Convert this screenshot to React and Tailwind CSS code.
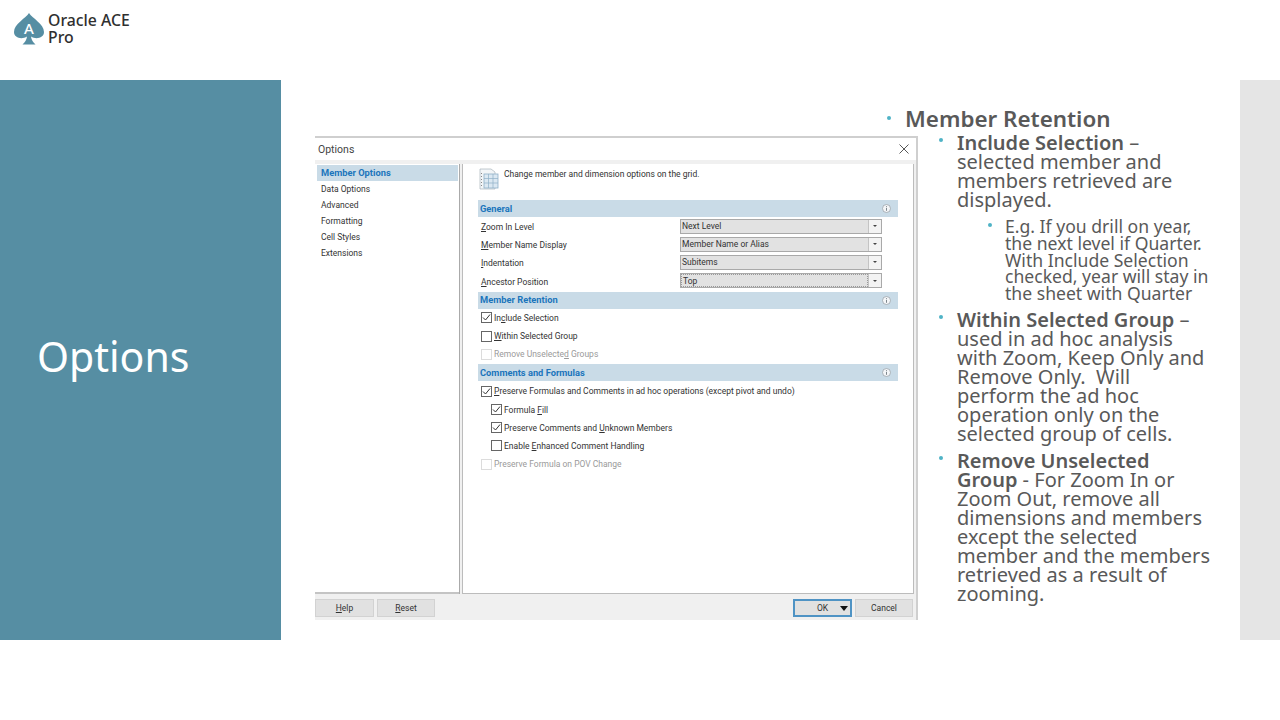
import React from "react";

const sans = "font-['Noto_Sans',sans-serif]";
const ui = "font-['Roboto',sans-serif] text-[8.5px] leading-[12px]";

function U({ children }) {
  return <span className="underline underline-offset-1">{children}</span>;
}

function Check({ checked, disabled }) {
  return (
    <span className={`w-[11px] h-[11px] border flex items-center justify-center shrink-0 bg-white ${disabled ? "border-[#dcdcdc]" : "border-[#666]"}`}>
      {checked && (
        <svg width="9" height="9" viewBox="0 0 9 9" fill="none" stroke="#333" strokeWidth="1">
          <path d="M1 4.5 L3.5 7 L8 1.5" />
        </svg>
      )}
    </span>
  );
}

function CheckRow({ checked, disabled, indent, children }) {
  return (
    <div className={`h-[18.2px] flex items-center gap-[2px] ${indent ? "pl-[13px]" : "pl-[3px]"} ${disabled ? "text-[#9a9a9a]" : "text-[#333]"}`}>
      <Check checked={checked} disabled={disabled} />
      <span>{children}</span>
    </div>
  );
}

function Section({ title, className = "" }) {
  return (
    <div className={`h-[17px] bg-[#c9dbe7] flex items-center justify-between pl-[2px] pr-[7px] ${className}`}>
      <span className="text-[#1b75bc] font-bold text-[9.3px]">{title}</span>
      <svg width="9" height="9" viewBox="0 0 9 9">
        <circle cx="4.5" cy="4.5" r="4" fill="#f4f6f8" stroke="#9aa3a9" strokeWidth="0.8" />
        <path d="M4.5 2.2v.8M4.5 3.8v3" stroke="#7d868c" strokeWidth="1" />
      </svg>
    </div>
  );
}

function Field({ label, value, focus }) {
  return (
    <div className="h-[18.2px] flex items-center pr-[16px] text-[#333]">
      <span className="pl-[3px] w-[202px] pt-[2px]">{label}</span>
      <div className="w-[202px] h-[15px] border border-[#a9a9a9] bg-[#e2e2e2] flex">
        <span className={`flex-1 pl-[1px] flex items-center ${focus ? "border border-dotted border-[#999]" : ""}`}>{value}</span>
        <span className="w-[13px] bg-[#f3f3f3] border-l border-[#c4c4c4] flex items-center justify-center">
          <span className="w-0 h-0 border-l-[2px] border-r-[2px] border-t-[2px] border-l-transparent border-r-transparent border-t-[#444]" />
        </span>
      </div>
    </div>
  );
}

function Btn({ children, w }) {
  return (
    <div className={`${w} h-[18px] bg-[#e1e1e1] border border-[#d2d2d2] flex items-center justify-center text-[#333]`}>{children}</div>
  );
}

function Dialog() {
  return (
    <div className={`ml-[34px] mt-[56px] w-[603px] h-[484px] shrink-0 flex flex-col bg-[#f0f0f0] border-t-2 border-r-2 border-[#cfcfcf] ${ui}`}>
      <div className="h-[22px] bg-white flex items-center justify-between pl-[3px] pr-[7px] shrink-0">
        <span className="text-[10.5px] text-[#444] pt-[1px]">Options</span>
        <svg width="10" height="10" viewBox="0 0 10 10" stroke="#444" strokeWidth="0.9">
          <path d="M0.5 0.5 L9.5 9.5 M9.5 0.5 L0.5 9.5" />
        </svg>
      </div>
      <div className="h-[434px] flex pt-[4px] shrink-0 pr-[3px]">
        <div className="w-[144px] bg-white border-b-2 border-[#c4c4c4] pl-[2px] pr-[1px] shrink-0 flex flex-col">
          <div className="h-[16px] bg-[#c9dbe7] pl-[4px] flex items-center text-[#1b75bc] font-bold text-[9.3px] mt-[1px]">Member Options</div>
          {["Data Options", "Advanced", "Formatting", "Cell Styles", "Extensions"].map((t) => (
            <div key={t} className="h-[15.9px] pl-[4px] flex items-center text-[#333]">{t}</div>
          ))}
        </div>
        <div className="w-[3px] bg-[#f0f0f0] border-l border-[#aaa] shrink-0" />
        <div className="flex-1 bg-white border-l border-r border-b border-[#bcbcbc] pl-[15px] pr-[15px] flex flex-col">
          <div className="h-[36px] flex items-start pt-[2px] gap-[4px] text-[#333]">
            <svg width="22" height="25" viewBox="0 0 22 25" className="shrink-0">
              <path d="M2 3h11l4 3v17H2z" fill="#f2f5f7" stroke="#a9b4bb" strokeWidth="0.7" />
              <rect x="6" y="8" width="14" height="14" fill="#dbe8f2" stroke="#8fb0c7" strokeWidth="0.8" />
              <path d="M6 12.5h14M6 17h14M10.5 8v14M15 8v14" stroke="#8fb0c7" strokeWidth="0.7" />
              <path d="M3.5 7v14" stroke="#8a8a8a" strokeWidth="1" strokeDasharray="1 2" />
            </svg>
            <span className="pt-[2px]">Change member and dimension options on the grid.</span>
          </div>
          <Section title="General" />
          <div className="flex flex-col">
            <Field label={<><U>Z</U>oom In Level</>} value="Next Level" />
            <Field label={<><U>M</U>ember Name Display</>} value="Member Name or Alias" />
            <Field label={<><U>I</U>ndentation</>} value="Subitems" />
            <Field label={<><U>A</U>ncestor Position</>} value="Top" focus />
          </div>
          <Section title="Member Retention" className="mt-[2px]" />
          <CheckRow checked>In<U>c</U>lude Selection</CheckRow>
          <CheckRow><U>W</U>ithin Selected Group</CheckRow>
          <CheckRow disabled>Remove Unselecte<U>d</U> Groups</CheckRow>
          <Section title="Comments and Formulas" className="mt-[1px] mb-[1px]" />
          <CheckRow checked><U>P</U>reserve Formulas and Comments in ad hoc operations (except pivot and undo)</CheckRow>
          <CheckRow checked indent>Formula <U>F</U>ill</CheckRow>
          <CheckRow checked indent>Preserve Comments and <U>U</U>nknown Members</CheckRow>
          <CheckRow indent>Enable <U>E</U>nhanced Comment Handling</CheckRow>
          <CheckRow disabled>Preserve Formula on POV Change</CheckRow>
        </div>
      </div>
      <div className="flex-1 flex items-start justify-between pr-[3px] pt-[5px]">
        <div className="flex gap-[3px]">
          <Btn w="w-[59px]"><span><U>H</U>elp</span></Btn>
          <Btn w="w-[58px]"><span><U>R</U>eset</span></Btn>
        </div>
        <div className="flex gap-[3px]">
          <div className="w-[59px] h-[18px] bg-[#e1e1e1] border-2 border-[#4f93c4] flex items-center text-[#333] pl-[22px] gap-[12px]">
            <span>OK</span>
            <span className="w-0 h-0 border-l-[4px] border-r-[4px] border-t-[5px] border-l-transparent border-r-transparent border-t-[#111]" />
          </div>
          <Btn w="w-[58px]">Cancel</Btn>
        </div>
      </div>
    </div>
  );
}

function Dot({ pos }) {
  return <span className={`absolute w-[4px] h-[4px] rounded-full bg-[#4fb3c6] ${pos}`} />;
}

function Notes() {
  return (
    <div className={`flex-1 min-w-0 -ml-[33px] pt-[28px] pr-[30px] text-[#595959] ${sans}`}>
      <div className="relative pl-[20px]">
        <Dot pos="left-[2px] top-[8px]" />
        <div className="text-[22.4px] leading-[22px] font-semibold">Member Retention</div>
      </div>
      <div className="pl-[72px]">
        <div className="relative mt-[3px]">
          <Dot pos="-left-[18px] top-[5px]" />
          <div className="text-[20px] leading-[19px]"><b className="font-semibold">Include Selection</b> – selected member and members retrieved are displayed.</div>
        </div>
        <div className="relative ml-[48px] mt-[9px]">
          <Dot pos="-left-[17px] top-[5px]" />
          <div className="text-[17.6px] leading-[16.8px]">E.g. If you drill on year, the next level if Quarter. With Include Selection checked, year will stay in the sheet with Quarter</div>
        </div>
        <div className="relative mt-[8px]">
          <Dot pos="-left-[18px] top-[5px]" />
          <div className="text-[20px] leading-[19px]"><b className="font-semibold">Within Selected Group</b> – used in ad hoc analysis with Zoom, Keep Only and Remove Only.&nbsp; Will perform the ad hoc operation only on the selected group of cells.</div>
        </div>
        <div className="relative mt-[8px]">
          <Dot pos="-left-[18px] top-[5px]" />
          <div className="text-[20px] leading-[19px]"><b className="font-semibold">Remove Unselected Group</b> - For Zoom In or Zoom Out, remove all dimensions and members except the selected member and the members retrieved as a result of zooming.</div>
        </div>
      </div>
    </div>
  );
}

export default function App() {
  return (
    <div className="w-[1280px] h-[720px] bg-white flex flex-col overflow-hidden">
      <header className="h-[80px] flex items-start pl-[14px] pt-[12px] gap-[4px] shrink-0">
        <svg width="30" height="33" viewBox="0 0 30 33">
          <path d="M15 1 C18 6 30 12 30 20 C30 26 22 28 17 24.5 C17.5 28 19 30 21.5 32.5 L8.5 32.5 C11 30 12.5 28 13 24.5 C8 28 0 26 0 20 C0 12 12 6 15 1 Z" fill="#568ea3" />
          <text x="15" y="22" textAnchor="middle" fontSize="15" fontWeight="500" fill="#fff" fontFamily="Noto Sans, sans-serif">A</text>
        </svg>
        <div className={`${sans} text-[15.8px] leading-[17px] font-medium text-[#2f2f2f]`}>
          Oracle ACE<br />Pro
        </div>
      </header>
      <main className="h-[560px] flex shrink-0">
        <div className="w-[281px] bg-[#568ea3] flex items-center pl-[37px] shrink-0">
          <h1 className={`${sans} text-[41px] text-white pb-[7px]`}>Options</h1>
        </div>
        <div className="flex-1 flex min-w-0">
          <Dialog />
          <Notes />
        </div>
        <div className="w-[40px] bg-[#e5e5e5] shrink-0" />
      </main>
    </div>
  );
}
